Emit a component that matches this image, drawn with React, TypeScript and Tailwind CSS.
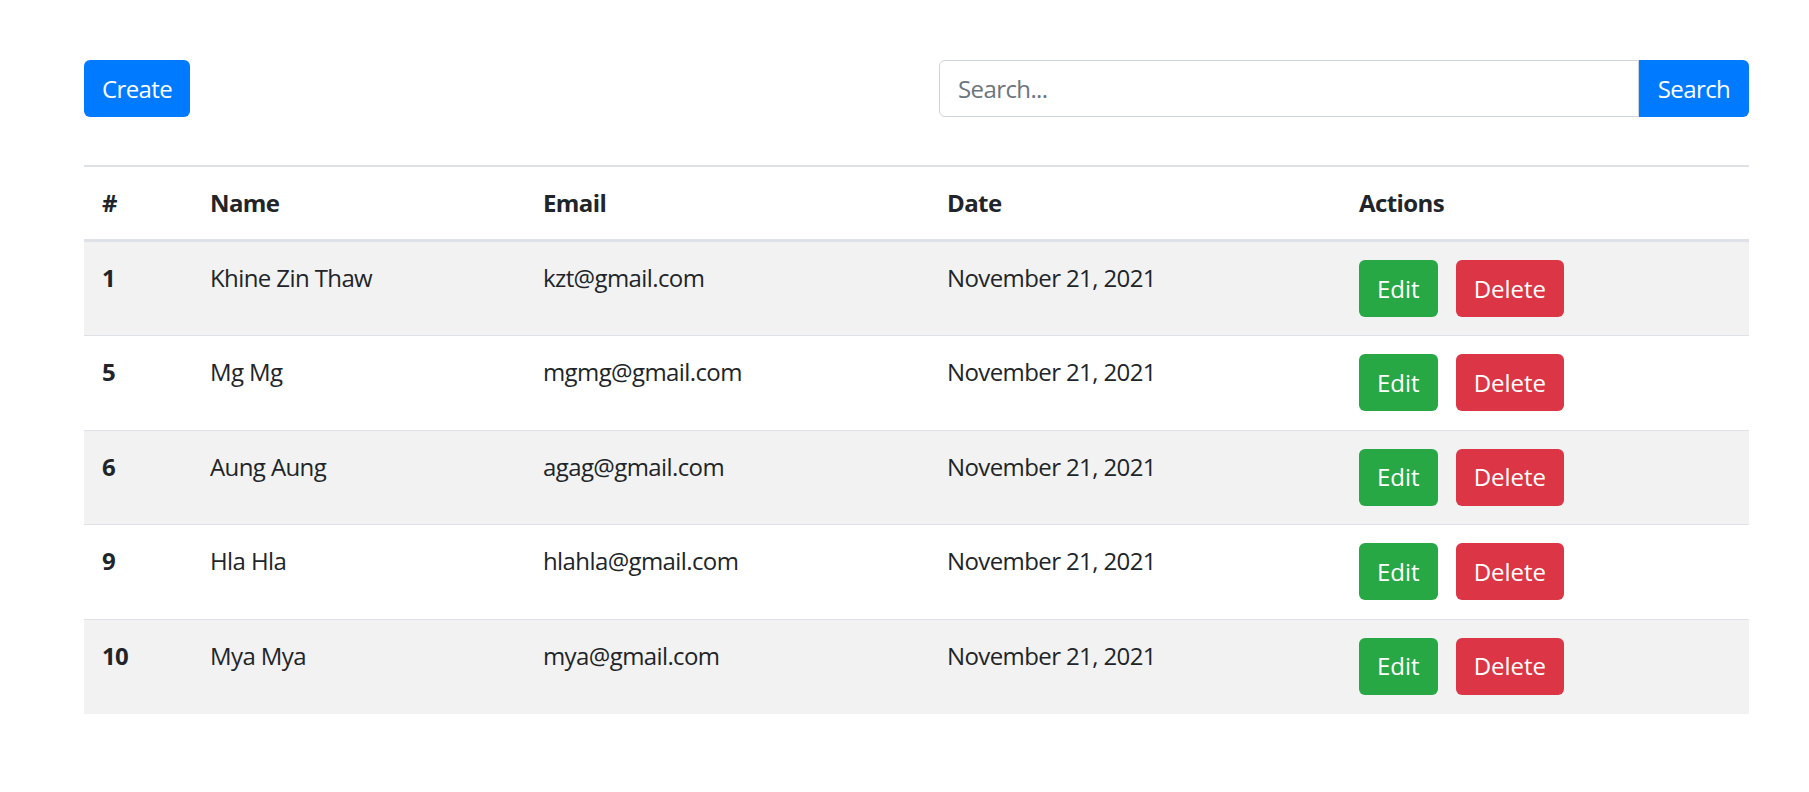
const rows = [
  { id: 1, name: 'Khine Zin Thaw', email: 'kzt@gmail.com' },
  { id: 5, name: 'Mg Mg', email: 'mgmg@gmail.com' },
  { id: 6, name: 'Aung Aung', email: 'agag@gmail.com' },
  { id: 9, name: 'Hla Hla', email: 'hlahla@gmail.com' },
  { id: 10, name: 'Mya Mya', email: 'mya@gmail.com' },
];

export default function App() {
  return (
    <div
      className="min-h-[792px] bg-white text-[24px] leading-[36px] tracking-[-0.6px] text-[#212529]"
      style={{ fontFamily: '"Open Sans", "Noto Sans", sans-serif' }}
    >
      <div className="ml-[84px] w-[1665px] pt-[60px]">
        {/* toolbar */}
        <div className="flex items-center justify-between">
          <button className="h-[57px] rounded-[6px] bg-[#007bff] px-[18px] text-white">
            Create
          </button>
          <form className="flex w-[810px]" onSubmit={(e) => e.preventDefault()}>
            <input
              className="h-[57px] flex-1 rounded-l-[6px] border border-[#ced4da] px-[18px] outline-none placeholder:text-[#6c757d]"
              placeholder="Search..."
            />
            <button className="h-[57px] w-[110px] rounded-r-[6px] bg-[#007bff] text-white">
              Search
            </button>
          </form>
        </div>

        {/* table */}
        <table className="mt-[48px] w-full border-collapse">
          <thead>
            <tr className="border-t-2 border-b-[3px] border-[#dee2e6] text-left">
              <th className="w-[108px] p-[18px] align-top font-bold">#</th>
              <th className="w-[333px] p-[18px] align-top font-bold">Name</th>
              <th className="w-[404px] p-[18px] align-top font-bold">Email</th>
              <th className="w-[412px] p-[18px] align-top font-bold">Date</th>
              <th className="p-[18px] align-top font-bold">Actions</th>
            </tr>
          </thead>
          <tbody>
            {rows.map((r, i) => (
              <tr
                key={r.id}
                className={`h-[94.5px] border-t border-[#dee2e6] first:border-t-0 ${i % 2 === 0 ? 'bg-[#f2f2f2]' : 'bg-white'}`}
              >
                <th className="p-[18px] text-left align-top font-bold">{r.id}</th>
                <td className="p-[18px] align-top">{r.name}</td>
                <td className="p-[18px] align-top">{r.email}</td>
                <td className="p-[18px] align-top">November 21, 2021</td>
                <td className="p-[18px] align-top">
                  <div className="flex gap-[18px] tracking-normal">
                    <button className="h-[57px] rounded-[6px] bg-[#28a745] px-[18px] text-white">
                      Edit
                    </button>
                    <button className="h-[57px] rounded-[6px] bg-[#dc3545] px-[18px] text-white">
                      Delete
                    </button>
                  </div>
                </td>
              </tr>
            ))}
          </tbody>
        </table>
      </div>
    </div>
  );
}
